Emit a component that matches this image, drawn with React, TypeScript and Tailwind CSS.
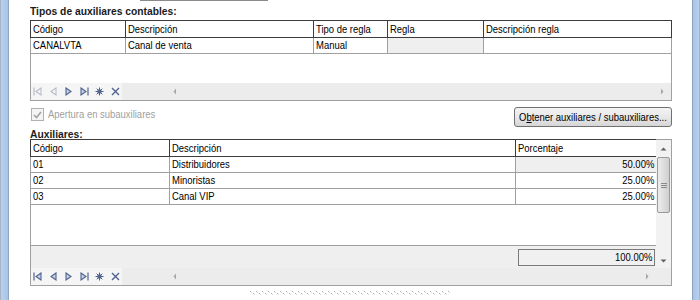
import React from "react";

const ui = "font-['Liberation_Sans',Arial,sans-serif] text-[11px] leading-none";

// Windows-style narrow text: Liberation Sans squeezed to the width of the dialog font
const T: React.FC<{ children: React.ReactNode; origin?: string; bold?: boolean; className?: string }> = ({
  children,
  origin = "origin-left",
  bold,
  className = "",
}) => (
  <span
    className={`inline-block whitespace-nowrap ${ui} ${origin} ${
      bold ? "font-bold scale-x-[0.935]" : "scale-x-[0.86]"
    } ${className}`}
  >
    {children}
  </span>
);

// grid navigator icons
const NavIcons: React.FC<{ firstEnabled: boolean }> = ({ firstEnabled }) => {
  const on = "#4f6290";
  const off = "#b7bccb";
  const a = firstEnabled ? on : off;
  return (
    <div className="flex items-center h-full w-[91px] bg-[#f5f5f5] pl-[2px] gap-[6.5px]">
      <svg width="9" height="9" viewBox="0 0 9 9">
        <path d="M1 0.5V8.5" stroke={a} strokeWidth="1.2" />
        <path d="M8 1L3 4.5L8 8Z" fill={firstEnabled ? "#c8d0e4" : "none"} stroke={a} strokeWidth="1.1" />
      </svg>
      <svg width="9" height="9" viewBox="0 0 9 9">
        <path d="M7 1L2 4.5L7 8Z" fill={firstEnabled ? "#c8d0e4" : "none"} stroke={a} strokeWidth="1.1" />
      </svg>
      <svg width="9" height="9" viewBox="0 0 9 9">
        <path d="M2 1L7 4.5L2 8Z" fill="#c8d0e4" stroke={on} strokeWidth="1.1" />
      </svg>
      <svg width="9" height="9" viewBox="0 0 9 9">
        <path d="M1 1L6 4.5L1 8Z" fill="#c8d0e4" stroke={on} strokeWidth="1.1" />
        <path d="M8 0.5V8.5" stroke={on} strokeWidth="1.2" />
      </svg>
      <svg width="9" height="9" viewBox="0 0 9 9">
        <path d="M4.5 0.5V8.5M0.5 4.5H8.5M1.7 1.7L7.3 7.3M7.3 1.7L1.7 7.3" stroke={on} strokeWidth="1" />
        <circle cx="4.5" cy="4.5" r="2.2" fill={on} />
      </svg>
      <svg width="9" height="9" viewBox="0 0 9 9">
        <path d="M1 1L8 8M8 1L1 8" stroke={on} strokeWidth="1.4" />
      </svg>
    </div>
  );
};

const NavBar: React.FC<{ firstEnabled: boolean; rightArrowPad: string }> = ({ firstEnabled, rightArrowPad }) => (
  <div className="flex h-[17px] shrink-0 bg-[#ececec]">
    <NavIcons firstEnabled={firstEnabled} />
    <div className={`flex-1 flex items-center justify-between pl-[51px] ${rightArrowPad}`}>
      <svg width="4" height="7" viewBox="0 0 4 7">
        <path d="M3 0.5L0.5 3.5L3 6.5Z" fill="#a6a6a6" />
      </svg>
      <svg width="4" height="7" viewBox="0 0 4 7">
        <path d="M1 0.5L3.5 3.5L1 6.5Z" fill="#a6a6a6" />
      </svg>
    </div>
  </div>
);

const Head: React.FC<{ w: string; children: React.ReactNode; last?: boolean }> = ({ w, children, last }) => (
  <div className={`${w} shrink-0 h-full flex items-center pl-[2px] overflow-hidden text-black ${last ? "" : "border-r border-[#3c3c3c]"}`}>
    <T>{children}</T>
  </div>
);

const Cell: React.FC<{ w: string; children?: React.ReactNode; gray?: boolean; right?: boolean; last?: boolean }> = ({
  w,
  children,
  gray,
  right,
  last,
}) => (
  <div
    className={`${w} shrink-0 h-full flex items-center text-black ${right ? "justify-end pr-[2px]" : "pl-[2px]"} ${
      gray ? "bg-[#efefef]" : "bg-white"
    } ${last ? "" : "border-r border-[#a0a0a0]"}`}
  >
    {children !== undefined && <T origin={right ? "origin-right" : "origin-left"}>{children}</T>}
  </div>
);

export default function App() {
  const auxiliares = [
    { code: "01", desc: "Distribuidores", pct: "50.00%" },
    { code: "02", desc: "Minoristas", pct: "25.00%" },
    { code: "03", desc: "Canal VIP", pct: "25.00%" },
  ];

  return (
    <div className="w-[700px] h-[300px] flex overflow-hidden bg-white">
      {/* left window frame */}
      <div className="w-[9px] h-full flex shrink-0">
        <div className="w-[1px] bg-[#a8b4c4]" />
        <div className="w-[7px] bg-gradient-to-r from-[#b9d1ee] to-[#a7c3e6]" />
        <div className="w-[1px] bg-[#8fa6c2]" />
      </div>

      <div className="flex-1 flex flex-col pl-[21px] pr-[20px]">
        <div className="ml-[110px] w-[128px] h-[1px] bg-[#8a8a8a] shrink-0" />

        <div className="mt-[5px] h-[14px] flex items-start text-[#1b1b1b] shrink-0">
          <T bold>Tipos de auxiliares contables:</T>
        </div>

        {/* tipos grid */}
        <div className="h-[81px] shrink-0 border border-[#a0a0a0] flex flex-col">
          <div className="h-[18px] shrink-0 -mt-px -mx-px flex border border-[#3c3c3c] bg-white">
            <Head w="w-[95px]">Código</Head>
            <Head w="w-[188px]">Descripción</Head>
            <Head w="w-[74px]">Tipo de regla</Head>
            <Head w="w-[96px]">Regla</Head>
            <Head w="flex-1" last>Descripción regla</Head>
          </div>
          <div className="h-[16px] shrink-0 flex border-b border-[#a0a0a0]">
            <Cell w="w-[95px]">CANALVTA</Cell>
            <Cell w="w-[188px]">Canal de venta</Cell>
            <Cell w="w-[74px]">Manual</Cell>
            <Cell w="w-[96px]" gray />
            <Cell w="flex-1" last />
          </div>
          <div className="flex-1 bg-white" />
          <NavBar firstEnabled={false} rightArrowPad="pr-[7px]" />
        </div>

        {/* checkbox + button */}
        <div className="flex items-start justify-between mt-[6px] h-[20px] shrink-0">
          <div className="flex items-center gap-[4px] pl-[1px] mt-[1px]">
            <div className="w-[13px] h-[13px] border border-[#b1b1b1] bg-[#f4f4f4] flex items-center justify-center">
              <svg width="9" height="8" viewBox="0 0 9 8">
                <path d="M1 4L3.5 6.5L8 1" fill="none" stroke="#a3a3a3" strokeWidth="1.6" />
              </svg>
            </div>
            <T className="text-[#a0a0a0]">Apertura en subauxiliares</T>
          </div>
          <button className="h-[20px] w-[158px] rounded-[3px] border border-[#707070] bg-gradient-to-b from-[#f4f4f4] via-[#e8e8e8] to-[#d6d6d6] flex items-center justify-center">
            <T origin="origin-center" className="text-black">
              O<span className="underline">b</span>tener auxiliares / subauxiliares...
            </T>
          </button>
        </div>

        <div className="mt-[2px] h-[10px] flex items-start text-[#1b1b1b] shrink-0">
          <T bold>Auxiliares:</T>
        </div>

        {/* auxiliares grid */}
        <div className="h-[147px] shrink-0 border border-[#a0a0a0] flex flex-col">
          <div className="flex-1 flex -mt-px">
            <div className="w-[625px] shrink-0 flex flex-col">
              <div className="h-[18px] w-[627px] shrink-0 -ml-px flex border border-[#3c3c3c] bg-white">
                <Head w="w-[139px]">Código</Head>
                <Head w="w-[346px]">Descripción</Head>
                <Head w="flex-1" last>Porcentaje</Head>
              </div>
              {auxiliares.map((r, i) => (
                <div key={r.code} className="h-[16px] shrink-0 flex border-b border-[#a0a0a0]">
                  <Cell w="w-[139px]">{r.code}</Cell>
                  <Cell w="w-[346px]">{r.desc}</Cell>
                  <Cell w="flex-1" gray={i === 0} right last>
                    {r.pct}
                  </Cell>
                </div>
              ))}
              <div className="flex-1 bg-white" />
              <div className="h-[23px] shrink-0 bg-[#efefef] border-t border-[#a0a0a0] flex items-center justify-end pr-[1px]">
                <div className="w-[137px] h-[17px] border border-[#7a7a7a] bg-[#f0f0f0] flex items-center justify-end pr-[2px]">
                  <T origin="origin-right">100.00%</T>
                </div>
              </div>
            </div>
            {/* vertical scrollbar */}
            <div className="flex-1 bg-[#f2f2f2] border-t border-[#a0a0a0] flex flex-col items-center">
              <div className="h-[17px] flex items-center justify-center">
                <svg width="7" height="4" viewBox="0 0 7 4">
                  <path d="M0.5 3.5L3.5 0.5L6.5 3.5Z" fill="#606060" />
                </svg>
              </div>
              <div className="w-[13px] h-[56px] rounded-[2px] border border-[#9a9a9a] bg-gradient-to-r from-[#ececec] via-[#dedede] to-[#cfcfcf] flex flex-col items-center justify-center gap-[1px]">
                <div className="w-[6px] h-px bg-[#8a8a8a]" />
                <div className="w-[6px] h-px bg-[#8a8a8a]" />
                <div className="w-[6px] h-px bg-[#8a8a8a]" />
              </div>
              <div className="flex-1" />
              <div className="h-[14px] flex items-center justify-center">
                <svg width="7" height="4" viewBox="0 0 7 4">
                  <path d="M0.5 0.5L3.5 3.5L6.5 0.5Z" fill="#606060" />
                </svg>
              </div>
            </div>
          </div>
          <NavBar firstEnabled rightArrowPad="pr-[22px]" />
        </div>

        {/* grip */}
        <div className="mt-[5px] ml-[220px] w-[200px] h-[4px] shrink-0">
          <svg width="200" height="4" viewBox="0 0 200 4">
            <defs>
              <pattern id="grip" width="6" height="4" patternUnits="userSpaceOnUse">
                <rect x="0" y="0" width="1" height="1" fill="#b0b0b0" />
                <rect x="3" y="2" width="1" height="1" fill="#b0b0b0" />
                <rect x="1" y="1" width="1" height="1" fill="#dadada" />
                <rect x="4" y="3" width="1" height="1" fill="#dadada" />
              </pattern>
            </defs>
            <rect width="200" height="4" fill="url(#grip)" />
          </svg>
        </div>
      </div>

      {/* right window frame */}
      <div className="w-[8px] h-full flex shrink-0">
        <div className="w-[1px] bg-[#8fa6c2]" />
        <div className="w-[6px] bg-gradient-to-r from-[#a7c3e6] to-[#b9d1ee]" />
        <div className="w-[1px] bg-[#a8b4c4]" />
      </div>
    </div>
  );
}
